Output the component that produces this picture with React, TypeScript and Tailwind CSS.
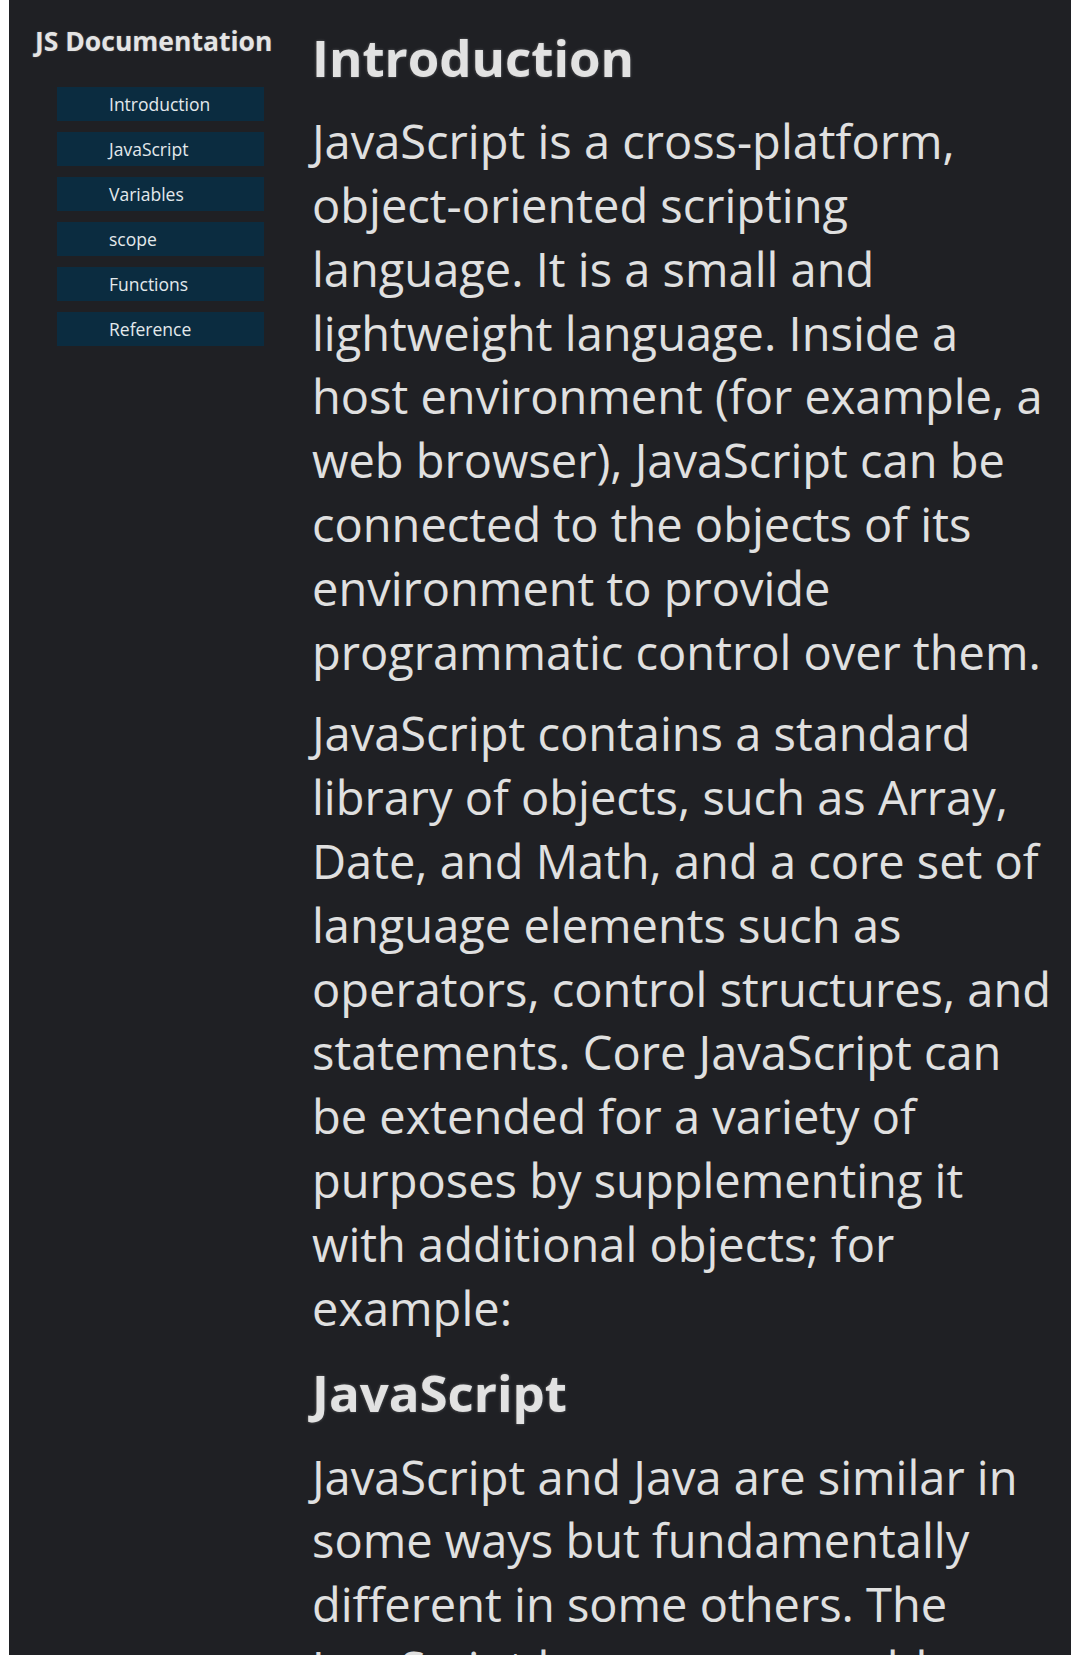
import React from "react";

const links = ["Introduction", "JavaScript", "Variables", "scope", "Functions", "Reference"];

const sections = [
  {
    title: "Introduction",
    paragraphs: [
      "JavaScript is a cross-platform, object-oriented scripting language. It is a small and lightweight language. Inside a host environment (for example, a web browser), JavaScript can be connected to the objects of its environment to provide programmatic control over them.",
      "JavaScript contains a standard library of objects, such as Array, Date, and Math, and a core set of language elements such as operators, control structures, and statements. Core JavaScript can be extended for a variety of purposes by supplementing it with additional objects; for example:",
    ],
  },
  {
    title: "JavaScript",
    paragraphs: [
      "JavaScript and Java are similar in some ways but fundamentally different in some others. The JavaScript language resembles Java but does not have Java's static typing and strong type checking.",
    ],
  },
];

const App: React.FC = () => {
  return (
    <div className="h-[1655px] overflow-hidden bg-white px-[9px] font-['Open_Sans',sans-serif]">
      <div className="flex h-full bg-[#1f2024] text-[#e0e0e0]">
        <nav className="w-[303px] shrink-0 pt-[22px] pl-[26px]">
          <h1 className="text-[26.5px] font-bold leading-normal text-[#e4e4e4] [text-shadow:0_0_2px_rgba(255,255,255,0.25)]">
            JS Documentation
          </h1>
          <ul className="mt-[25px] ml-[22px] flex w-[207px] flex-col gap-[11px]">
            {links.map((link) => (
              <li key={link}>
                <a
                  href={"#" + link}
                  className="flex h-[34px] items-center bg-[#0b2c40] pl-[52px] text-[17.5px] text-[#e3e9ec]"
                >
                  {link}
                </a>
              </li>
            ))}
          </ul>
        </nav>
        <main className="flex-1 pt-[27px] pr-[12px]">
          {sections.map((section, i) => (
            <section key={section.title} id={section.title} className={i > 0 ? "mt-[22px]" : ""}>
              <h2 className="mb-[22px] text-[51px] font-bold leading-[1.2] text-[#e2e2e2] [text-shadow:0_0_3px_rgba(255,255,255,0.3)]">
                {section.title}
              </h2>
              {section.paragraphs.map((p, j) => (
                <p key={j} className="mb-[18px] text-[47px] leading-[63.8px]">
                  {p}
                </p>
              ))}
            </section>
          ))}
        </main>
      </div>
    </div>
  );
};

export default App;
